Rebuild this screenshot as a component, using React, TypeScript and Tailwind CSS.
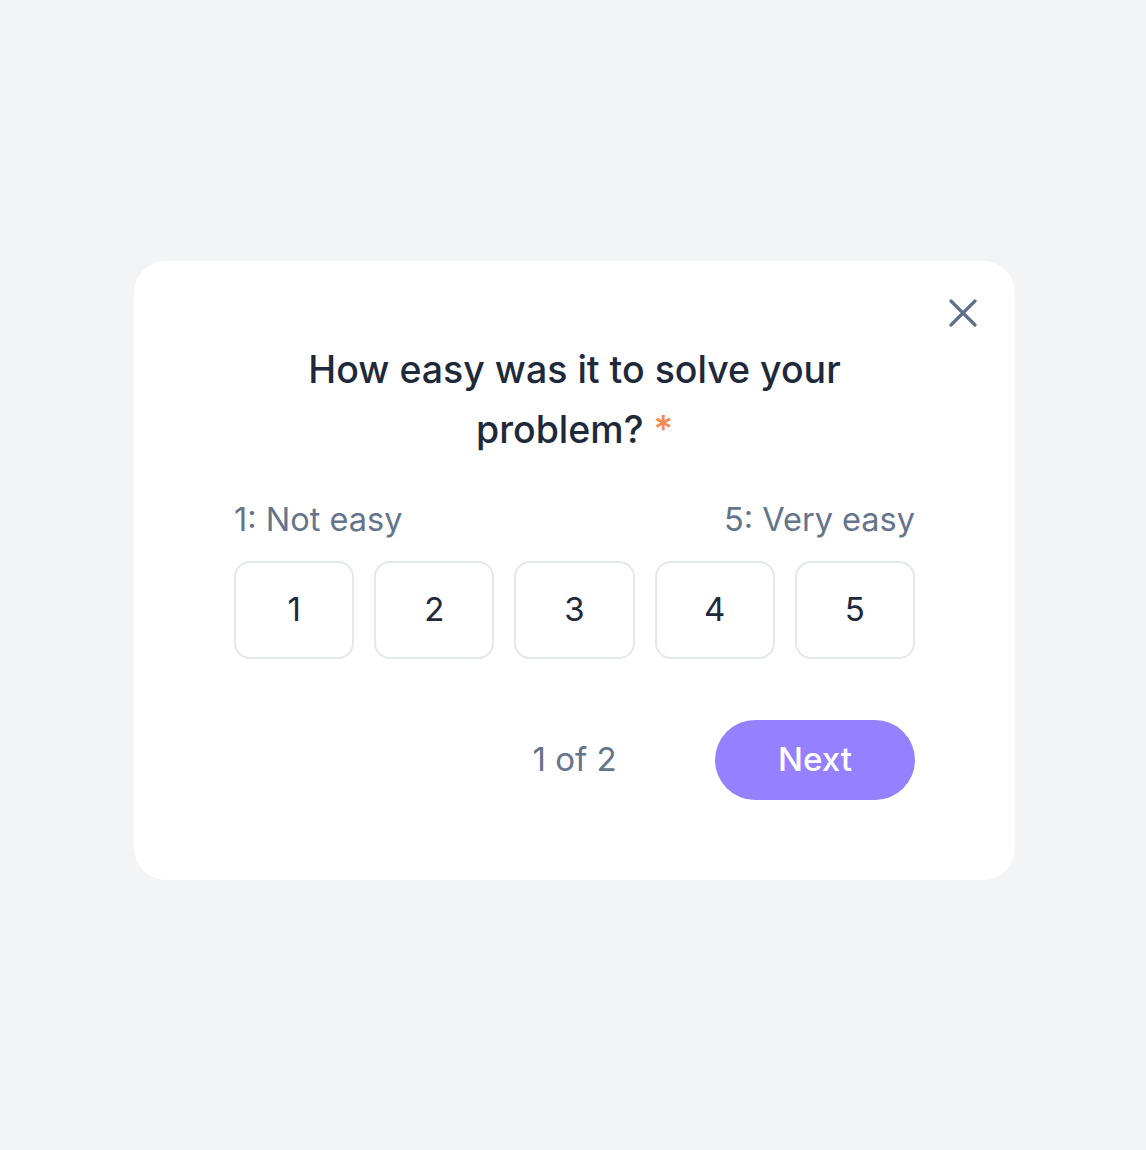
const ratings = [1, 2, 3, 4, 5];

export default function App() {
  return (
    <div
      className="min-h-[1150px] w-full bg-[#f3f4f6] flex items-center justify-center"
      style={{ fontFamily: "Inter, 'Noto Sans', sans-serif" }}
    >
      <div className="relative w-[881px] ml-[3px] bg-white rounded-[32px] px-[100px] pt-[79px] pb-[80px] -mt-[9px]">
        {/* close */}
        <button className="absolute right-[38px] top-[38px] text-[#5f7189]">
          <svg width="28" height="28" viewBox="0 0 28 28" fill="none">
            <path
              d="M2 2L26 26M26 2L2 26"
              stroke="currentColor"
              strokeWidth="3.2"
              strokeLinecap="round"
            />
          </svg>
        </button>

        <h2 className="text-center text-[37.5px] leading-[60px] font-medium text-[#1e293b] px-[40px]">
          How easy was it to solve your problem?{" "}
          <span className="text-[#fb8a4f]">*</span>
        </h2>

        {/* scale labels */}
        <div className="mt-[40px] flex justify-between text-[32.5px] leading-[40px] text-[#64748b]">
          <span>1: Not easy</span>
          <span>5: Very easy</span>
        </div>

        {/* ratings */}
        <div className="mt-[21px] grid grid-cols-5 gap-[20px]">
          {ratings.map((n) => (
            <button
              key={n}
              className="h-[98px] rounded-[16px] border-2 border-[#e2e8f0] bg-white text-[33px] text-[#1e293b]"
            >
              {n}
            </button>
          ))}
        </div>

        {/* footer */}
        <div className="mt-[61px] grid grid-cols-3 items-center">
          <div />
          <div className="text-center text-[33px] text-[#64748b]">1 of 2</div>
          <div className="flex justify-end">
            <button className="w-[200px] h-[80px] rounded-full bg-[#9580ff] text-white text-[33px] font-medium">
              Next
            </button>
          </div>
        </div>
      </div>
    </div>
  );
}
